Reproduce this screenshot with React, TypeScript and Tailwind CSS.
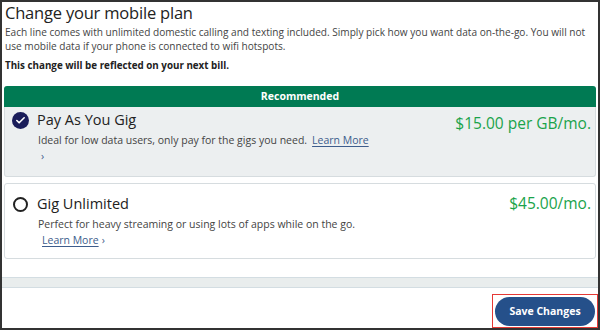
import { Check } from "lucide-react";

const plans = [
  {
    id: "payg",
    title: "Pay As You Gig",
    description: "Ideal for low data users, only pay for the gigs you need.",
    price: "$15.00 per GB/mo.",
    selected: true,
  },
  {
    id: "unlimited",
    title: "Gig Unlimited",
    description: "Perfect for heavy streaming or using lots of apps while on the go.",
    price: "$45.00/mo.",
    selected: false,
  },
];

export default function App() {
  const font = { fontFamily: '"Open Sans", "Noto Sans", sans-serif' };
  return (
    <div
      className="w-[600px] h-[330px] border-2 border-[#333] bg-white flex flex-col overflow-hidden text-[#333]"
      style={font}
    >
      <div className="px-[3px]">
        <h1 className="text-[16.5px] leading-[22px] text-[#222] tracking-[-0.2px]">
          Change your mobile plan
        </h1>
        <p className="text-[10.1px] leading-[14px] text-[#444] mt-[1px] whitespace-nowrap">
          Each line comes with unlimited domestic calling and texting included. Simply pick how you want data on-the-go. You will not
          <br />
          use mobile data if your phone is connected to wifi hotspots.
        </p>
        <p className="text-[9.8px] leading-[14px] font-bold text-[#222] mt-[6px]">
          This change will be reflected on your next bill.
        </p>
      </div>

      <div className="mx-[2px] mt-[13px]">
        <div className="h-[21px] bg-[#007a53] rounded-t-[3px] flex items-center justify-center text-white text-[10.5px] font-bold">
          Recommended
        </div>
        {plans.map((plan, i) => (
          <div
            key={plan.id}
            className={
              plan.selected
                ? "bg-[#eceff0] border border-[#d6dcdf] border-t-0 rounded-b-[3px] h-[70px] flex"
                : "bg-white border border-[#d6dcdf] rounded-[3px] h-[76px] mt-[6px] flex"
            }
          >
            <div className="w-[32px] flex justify-center pr-[2px] pt-[4px]">
              {plan.selected ? (
                <span className="w-[17px] h-[17px] rounded-full bg-[#1a1d5a] flex items-center justify-center mt-[1px]">
                  <Check size={11} strokeWidth={3.5} color="white" />
                </span>
              ) : (
                <span className="w-[15px] h-[15px] rounded-full border-2 border-[#222] mt-[9px]" />
              )}
            </div>
            <div className="flex-1 flex flex-col">
              <div className={i === 0 ? "flex justify-between pt-[2px]" : "flex justify-between pt-[9px]"}>
                <span className="text-[14.5px] leading-[22px] text-[#222]">{plan.title}</span>
                <span
                  className={
                    i === 0
                      ? "text-[15.5px] leading-[22px] text-[#1aa34a] font-medium pr-[4px] mt-[3px]"
                      : "text-[15.5px] leading-[22px] text-[#1aa34a] font-medium pr-[4px] mt-[-1px]"
                  }
                >
                  {plan.price}
                </span>
              </div>
              {i === 0 ? (
                <div className="text-[10.5px] leading-[16px] text-[#444] mt-[-2px] pl-[1px]">
                  {plan.description}
                  <span className="underline underline-offset-2 ml-[5px] text-[#3d5c8c]">Learn More</span>
                  <div className="text-[#3d5c8c] pl-[3px]">›</div>
                </div>
              ) : (
                <div className="text-[10.5px] leading-[16px] text-[#444] pl-[1px] mt-[1px]">
                  {plan.description}
                  <div className="pl-[4px] text-[#3d5c8c]">
                    <span className="underline underline-offset-2">Learn More</span>
                    <span className="ml-[3px]">›</span>
                  </div>
                </div>
              )}
            </div>
          </div>
        ))}
      </div>

      <div className="mt-[18px] h-[11px] bg-[#e9eded] border-t border-b border-[#d3dde2]" />

      <div className="flex-1 flex justify-end items-end">
        <div className="border border-[#e53935] p-[2px] pb-[1px]">
          <button className="h-[29px] w-[100px] rounded-full bg-[#25508a] text-white text-[10.5px] font-bold">
            Save Changes
          </button>
        </div>
      </div>
    </div>
  );
}
